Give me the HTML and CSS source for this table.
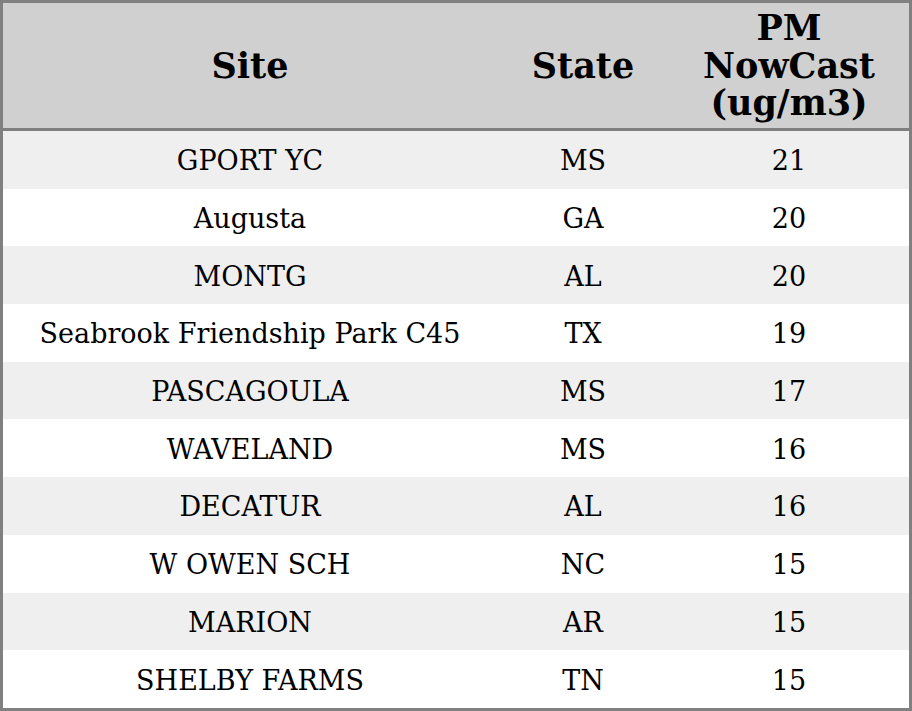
FILE: index.html
```html
<!DOCTYPE html>
<html>
<head>
<meta charset="utf-8">
<link rel="stylesheet" href="styles.css">
</head>
<body>
<table class="aq-table">
  <colgroup>
    <col class="col-site">
    <col class="col-state">
    <col class="col-pm">
  </colgroup>
  <thead>
    <tr class="head-row">
      <th>Site</th>
      <th>State</th>
      <th>PM<br>NowCast<br>(ug/m3)</th>
    </tr>
  </thead>
  <tbody>
    <tr><td>GPORT YC</td><td>MS</td><td>21</td></tr>
    <tr><td>Augusta</td><td>GA</td><td>20</td></tr>
    <tr><td>MONTG</td><td>AL</td><td>20</td></tr>
    <tr><td>Seabrook Friendship Park C45</td><td>TX</td><td>19</td></tr>
    <tr><td>PASCAGOULA</td><td>MS</td><td>17</td></tr>
    <tr><td>WAVELAND</td><td>MS</td><td>16</td></tr>
    <tr><td>DECATUR</td><td>AL</td><td>16</td></tr>
    <tr><td>W OWEN SCH</td><td>NC</td><td>15</td></tr>
    <tr><td>MARION</td><td>AR</td><td>15</td></tr>
    <tr><td>SHELBY FARMS</td><td>TN</td><td>15</td></tr>
  </tbody>
</table>
</body>
</html>
```
FILE: styles.css
```css
html, body {
  margin: 0;
  padding: 0;
  background: #ffffff;
}
.aq-table {
  width: 912px;
  height: 711px;
  border: 3px solid #808080;
  border-collapse: separate;
  border-spacing: 0;
  table-layout: fixed;
  font-family: "DejaVu Serif", serif;
  color: #000;
}
.col-site { width: 494px; }
.col-state { width: 172px; }
.col-pm { width: 240px; }
.aq-table th {
  background: #d0d0d0;
  font-size: 35px;
  font-weight: bold;
  line-height: 37.5px;
  height: 125px;
  padding: 0;
  text-align: center;
  vertical-align: middle;
  border-bottom: 3px solid #808080;
  box-sizing: border-box;
}
.head-row { height: 128px; }
.aq-table td {
  font-size: 27px;
  text-align: center;
  vertical-align: middle;
  padding: 2px 0 0 0;
  height: 57.7px;
  box-sizing: border-box;
}
.aq-table tbody tr:nth-child(odd) td { background: #efefef; }
.aq-table tbody tr:nth-child(even) td { background: #ffffff; }
```
